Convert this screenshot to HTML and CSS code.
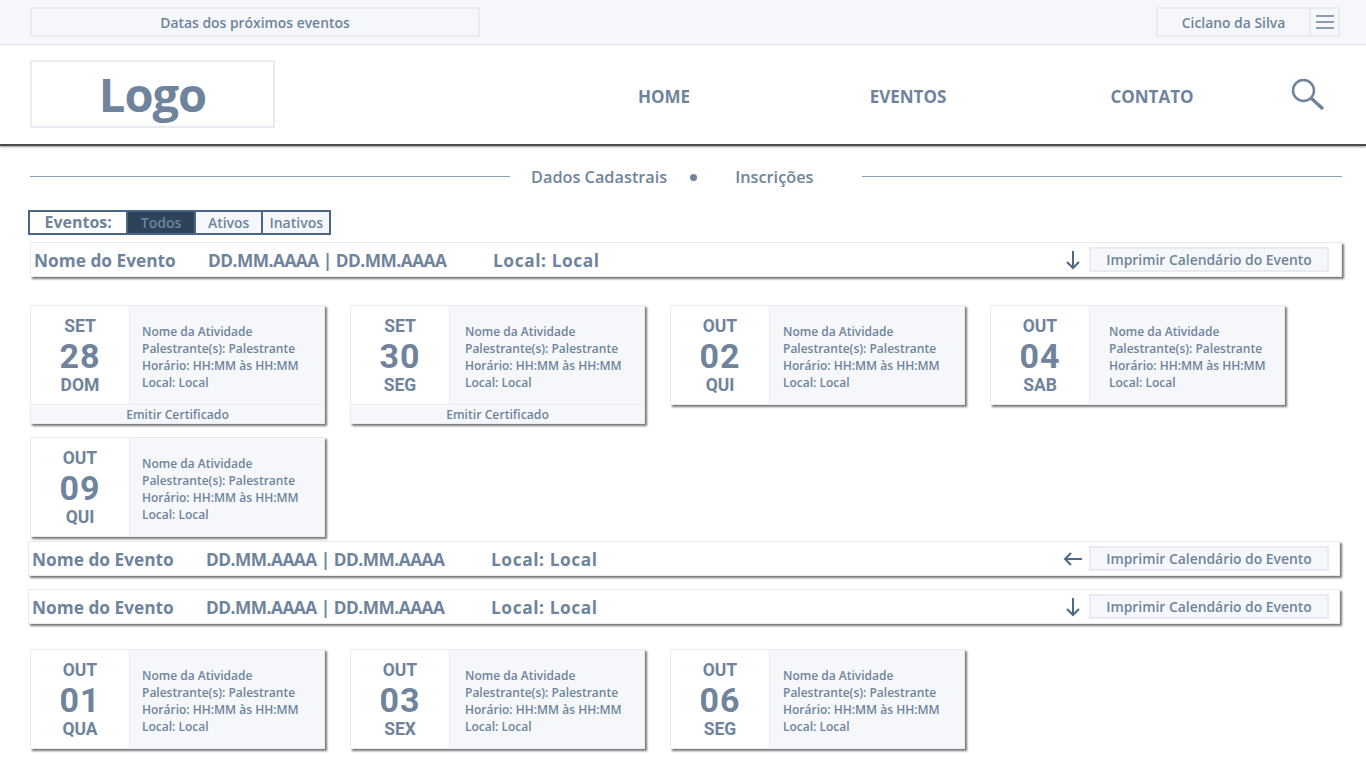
FILE: index.html
```html
<!DOCTYPE html>
<html lang="pt-BR">
<head>
    <meta charset="UTF-8">
    <link rel="stylesheet" href="styles.css">
    <title>Eventos</title>
</head>
<body>
    <div class="topbar">
        <div class="next-dates">Datas dos próximos eventos</div>
        <div class="user-box">
            <div class="user-name">Ciclano da Silva</div>
            <div class="user-menu">
                <svg width="18" height="14" viewBox="0 0 18 14"><path d="M0 1H18M0 7H18M0 13H18" stroke="#8a9db3" stroke-width="2" fill="none"/></svg>
            </div>
        </div>
    </div>

    <div class="header">
        <div class="logo">Logo</div>
        <div class="nav">
            <a class="nav-item">HOME</a>
            <a class="nav-item">EVENTOS</a>
            <a class="nav-item">CONTATO</a>
        </div>
        <svg class="search" width="34" height="34" viewBox="0 0 34 34"><circle cx="12.5" cy="12.5" r="10.5" stroke="#6f849c" stroke-width="2.5" fill="none"/><path d="M20 20L32 31" stroke="#6f849c" stroke-width="3.5" fill="none"/></svg>
    </div>

    <div class="subnav">
        <div class="subnav-line"></div>
        <div class="subnav-links">
            <span>Dados Cadastrais</span>
            <i class="dot"></i>
            <span>Inscrições</span>
        </div>
        <div class="subnav-line"></div>
    </div>

    <div class="filter">
        <div class="filter-label">Eventos:</div>
        <div class="filter-btn active">Todos</div>
        <div class="filter-btn">Ativos</div>
        <div class="filter-btn">Inativos</div>
    </div>

    <div class="event-bar">
        <div class="event-name">Nome do Evento</div>
        <div class="event-dates">DD.MM.AAAA | DD.MM.AAAA</div>
        <div class="event-local">Local: Local</div>
        <svg class="arrow" width="20" height="20" viewBox="0 0 20 20"><path d="M10 1V18M4 12L10 18L16 12" stroke="#4f6884" stroke-width="2" fill="none"/></svg>
        <div class="print-btn">Imprimir Calendário do Evento</div>
    </div>

    <div class="cards">
        <div class="card">
            <div class="card-main">
                <div class="card-date"><div class="month">SET</div><div class="day">28</div><div class="week">DOM</div></div>
                <div class="card-info">
                    <div>Nome da Atividade</div><div>Palestrante(s): Palestrante</div><div>Horário: HH:MM às HH:MM</div><div>Local: Local</div>
                </div>
            </div>
            <div class="card-foot">Emitir Certificado</div>
        </div>
        <div class="card">
            <div class="card-main">
                <div class="card-date"><div class="month">SET</div><div class="day">30</div><div class="week">SEG</div></div>
                <div class="card-info">
                    <div>Nome da Atividade</div><div>Palestrante(s): Palestrante</div><div>Horário: HH:MM às HH:MM</div><div>Local: Local</div>
                </div>
            </div>
            <div class="card-foot">Emitir Certificado</div>
        </div>
        <div class="card">
            <div class="card-main">
                <div class="card-date"><div class="month">OUT</div><div class="day">02</div><div class="week">QUI</div></div>
                <div class="card-info">
                    <div>Nome da Atividade</div><div>Palestrante(s): Palestrante</div><div>Horário: HH:MM às HH:MM</div><div>Local: Local</div>
                </div>
            </div>
        </div>
        <div class="card">
            <div class="card-main">
                <div class="card-date"><div class="month">OUT</div><div class="day">04</div><div class="week">SAB</div></div>
                <div class="card-info">
                    <div>Nome da Atividade</div><div>Palestrante(s): Palestrante</div><div>Horário: HH:MM às HH:MM</div><div>Local: Local</div>
                </div>
            </div>
        </div>
        <div class="card">
            <div class="card-main">
                <div class="card-date"><div class="month">OUT</div><div class="day">09</div><div class="week">QUI</div></div>
                <div class="card-info">
                    <div>Nome da Atividade</div><div>Palestrante(s): Palestrante</div><div>Horário: HH:MM às HH:MM</div><div>Local: Local</div>
                </div>
            </div>
        </div>
    </div>

    <div class="event-bar shifted closed">
        <div class="event-name">Nome do Evento</div>
        <div class="event-dates">DD.MM.AAAA | DD.MM.AAAA</div>
        <div class="event-local">Local: Local</div>
        <svg class="arrow" width="20" height="20" viewBox="0 0 20 20"><path d="M19 10H2M8 4L2 10L8 16" stroke="#4f6884" stroke-width="2" fill="none"/></svg>
        <div class="print-btn">Imprimir Calendário do Evento</div>
    </div>

    <div class="event-bar shifted">
        <div class="event-name">Nome do Evento</div>
        <div class="event-dates">DD.MM.AAAA | DD.MM.AAAA</div>
        <div class="event-local">Local: Local</div>
        <svg class="arrow" width="20" height="20" viewBox="0 0 20 20"><path d="M10 1V18M4 12L10 18L16 12" stroke="#4f6884" stroke-width="2" fill="none"/></svg>
        <div class="print-btn">Imprimir Calendário do Evento</div>
    </div>

    <div class="cards last">
        <div class="card">
            <div class="card-main">
                <div class="card-date"><div class="month">OUT</div><div class="day">01</div><div class="week">QUA</div></div>
                <div class="card-info">
                    <div>Nome da Atividade</div><div>Palestrante(s): Palestrante</div><div>Horário: HH:MM às HH:MM</div><div>Local: Local</div>
                </div>
            </div>
        </div>
        <div class="card">
            <div class="card-main">
                <div class="card-date"><div class="month">OUT</div><div class="day">03</div><div class="week">SEX</div></div>
                <div class="card-info">
                    <div>Nome da Atividade</div><div>Palestrante(s): Palestrante</div><div>Horário: HH:MM às HH:MM</div><div>Local: Local</div>
                </div>
            </div>
        </div>
        <div class="card">
            <div class="card-main">
                <div class="card-date"><div class="month">OUT</div><div class="day">06</div><div class="week">SEG</div></div>
                <div class="card-info">
                    <div>Nome da Atividade</div><div>Palestrante(s): Palestrante</div><div>Horário: HH:MM às HH:MM</div><div>Local: Local</div>
                </div>
            </div>
        </div>
    </div>
</body>
</html>
```

FILE: styles.css
```css
* {
    box-sizing: border-box;
}

html, body {
    height: 768px;
    overflow: hidden;
}

body {
    margin: 0;
    background-color: #fff;
    color: #6f849c;
    font-family: "Open Sans", sans-serif;
    font-weight: 600;
}

.topbar {
    height: 45px;
    background-color: #f5f7fb;
    border-bottom: 1px solid #e8ecf1;
    padding: 7px 26px 0 30px;
    display: flex;
    justify-content: space-between;
}

.next-dates {
    width: 450px;
    height: 30px;
    border: 2px solid #e8ecf1;
    text-align: center;
    font-size: 13.9px;
    line-height: 28px;
}

.user-box {
    width: 184px;
    height: 30px;
    border: 2px solid #e8ecf1;
    display: flex;
    font-size: 13.9px;
    line-height: 28px;
}

.user-name {
    flex: 1;
    text-align: center;
    border-right: 2px solid #e8ecf1;
}

.user-menu {
    width: 27px;
    padding: 6px 0 0 5px;
}

.user-menu svg {
    display: block;
}

.header {
    height: 101px;
    border-bottom: 2px solid #4a4a4a;
    box-shadow: 0 1px 2px #999;
    padding: 15px 41px 0 30px;
    display: flex;
    align-items: flex-start;
}

.logo {
    width: 245px;
    height: 68px;
    border: 2px solid #e8ecf1;
    text-align: center;
    font-size: 47px;
    font-weight: 700;
    letter-spacing: -1px;
    line-height: 64px;
}

.nav {
    display: flex;
    margin-left: 267px;
    padding-top: 24px;
}

.nav-item {
    width: 244px;
    text-align: center;
    font-size: 17px;
    font-weight: 700;
    line-height: 25px;
}

.search {
    margin: 18px 0 0 auto;
}

.subnav {
    display: flex;
    align-items: center;
    padding: 0 24px 0 30px;
    margin-top: 19px;
    height: 24px;
}

.subnav-line {
    flex: 1;
    height: 1px;
    margin-bottom: 2px;
    background-color: #8a9db3;
}

.subnav-links {
    width: 352px;
    display: flex;
    align-items: center;
    padding-left: 21px;
    font-size: 16.3px;
}

.dot {
    width: 7px;
    height: 7px;
    border-radius: 50%;
    background-color: #6f849c;
    margin: 0 38px 0 23px;
}

.filter {
    display: flex;
    width: 303px;
    height: 25px;
    margin: 21px 0 0 28px;
    border: 2px solid #4a6585;
    font-size: 14px;
    line-height: 21px;
    text-align: center;
}

.filter-label {
    width: 97px;
    font-size: 16px;
    font-weight: 700;
}

.filter-btn {
    width: 68px;
    background-color: #f5f7fb;
    border-left: 2px solid #4a6585;
}

.filter-btn.active {
    background-color: #2f4358;
}

.event-bar {
    display: flex;
    align-items: center;
    width: 1312px;
    height: 35px;
    margin: 7px 0 0 30px;
    padding: 0 12px 0 3px;
    border: 1px solid #e8ecf1;
    box-shadow: 2px 2px 2px #777;
    font-size: 17.3px;
    font-weight: 700;
}

.event-bar.shifted {
    margin-left: 28px;
    padding-right: 10px;
    margin-top: 13px;
}

.event-bar.closed {
    margin-top: 4px;
}

.event-name,
.event-dates,
.event-local {
    padding-top: 2px;
}

.event-name {
    width: 174px;
}

.event-dates {
    width: 285px;
    letter-spacing: -.5px;
}

.event-local {
    flex: 1;
    letter-spacing: .6px;
}

.arrow {
    margin-right: 6px;
}

.print-btn {
    width: 240px;
    height: 25px;
    border: 2px solid #e8ecf1;
    background-color: #f5f7fb;
    text-align: center;
    font-size: 13.9px;
    font-weight: 600;
    line-height: 22px;
}

.cards {
    display: flex;
    flex-wrap: wrap;
    column-gap: 25px;
    row-gap: 13px;
    padding-left: 30px;
    margin-top: 28px;
}

.cards.last {
    margin-top: 25px;
}

.card {
    width: 295px;
    align-self: flex-start;
    border: 1px solid #e8ecf1;
    box-shadow: 2px 2px 2px #777;
}

.card-main {
    display: flex;
    height: 98px;
}

.card-date {
    width: 99px;
    border-right: 1px solid #e8ecf1;
    text-align: center;
    padding-top: 8px;
    font-family: Roboto, sans-serif;
    font-size: 17.5px;
    font-weight: 700;
    line-height: 24px;
}

.day {
    font-size: 34px;
    letter-spacing: 1px;
    line-height: 37px;
}

.week {
    line-height: 21px;
}

.card-info {
    flex: 1;
    background-color: #f5f7fb;
    padding: 17px 0 0 12px;
    font-size: 12px;
    line-height: 17px;
}

.card:nth-child(2) .card-info {
    padding-left: 15px;
}

.card:nth-child(3) .card-info {
    padding-left: 13px;
}

.card:nth-child(4) .card-info {
    padding-left: 19px;
}

.card-foot {
    height: 19px;
    background-color: #f5f7fb;
    border-top: 1px solid #e8ecf1;
    text-align: center;
    font-size: 12.2px;
    line-height: 20px;
}
```
